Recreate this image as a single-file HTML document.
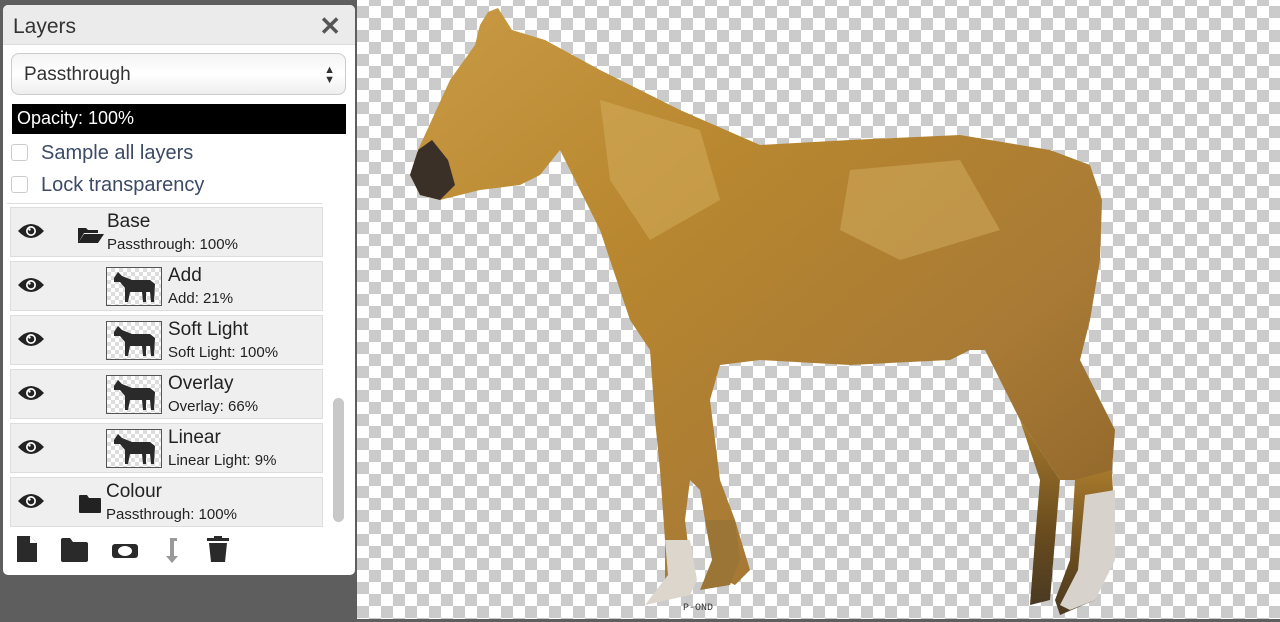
<!DOCTYPE html>
<html><head><meta charset="utf-8"><style>
*{box-sizing:border-box;margin:0;padding:0}
body{width:1280px;height:622px;background:#5e5e5e;position:relative;overflow:hidden;font-family:"Liberation Sans",sans-serif}
#canvas{position:absolute;left:357px;top:0;width:923px;height:619px;background-color:#fff;
background-image:linear-gradient(45deg,#cbcbcb 25%,transparent 25%,transparent 75%,#cbcbcb 75%),linear-gradient(45deg,#cbcbcb 25%,transparent 25%,transparent 75%,#cbcbcb 75%);
background-size:24px 24px;background-position:0 -6px,12px 6px}
#panel{position:absolute;left:3px;top:5px;width:352px;height:570px;background:#fff;border-radius:5px;overflow:hidden}
.hdr{height:40px;background:#ebebeb;border-bottom:1px solid #ddd;position:relative}
.hdr span{position:absolute;left:10px;top:10px;font-size:21px;color:#333}
.hdr b{position:absolute;right:14px;top:6px;font-size:26px;color:#555}
.sel{position:absolute;left:8px;top:48px;width:335px;height:42px;border:1px solid #ccc;border-radius:8px;background:linear-gradient(#f4f4f4,#fff 50%,#eee);font-size:19px;color:#333;padding:10px 12px}
.sel i{position:absolute;right:10px;top:11px;font-style:normal;font-size:11px;line-height:10px;color:#333}
.op{position:absolute;left:9px;top:99px;width:334px;height:30px;background:#000;color:#fff;font-size:18px;padding:4px 5px}
.cb{position:absolute;left:8px;width:17px;height:17px;border:1px solid #ccc;border-radius:3px}
.cl{position:absolute;left:38px;font-size:20px;color:#3c4a66}
.list{position:absolute;left:4px;top:198px;width:315px;height:322px;border-top:1px solid #ddd}
.row{position:absolute;left:3px;width:313px;height:50px;background:#efefef;border:1px solid #ddd}
.eye{position:absolute;left:6px;top:14px}
.n{position:absolute;font-size:19px;color:#222}
.s{position:absolute;font-size:15px;color:#222}
.th{position:absolute;left:95px;top:5px;width:56px;height:39px;border:1px solid #555;background-color:#fff;background-image:linear-gradient(45deg,#ddd 25%,transparent 25%,transparent 75%,#ddd 75%),linear-gradient(45deg,#ddd 25%,transparent 25%,transparent 75%,#ddd 75%);background-size:8px 8px;background-position:0 0,4px 4px}
.th svg{position:absolute;left:3px;top:2px}
.sb{position:absolute;left:330px;top:393px;width:11px;height:124px;background:#c8c8c8;border-radius:6px}
</style></head><body>
<div id="canvas">
<svg width="923" height="619" viewBox="357 0 923 619" style="position:absolute;left:0;top:0">
<defs>
<linearGradient id="g" x1="0" y1="0" x2="1" y2="1">
<stop offset="0" stop-color="#c99a45"/><stop offset=".35" stop-color="#b8872f"/><stop offset=".7" stop-color="#a87a35"/><stop offset="1" stop-color="#8a6228"/></linearGradient>
<linearGradient id="leg" x1="0" y1="0" x2="0" y2="1"><stop offset="0" stop-color="#a77a2c"/><stop offset=".6" stop-color="#6a4c1e"/><stop offset="1" stop-color="#4a3a22"/></linearGradient>
</defs>
<path d="M488,12 L498,8 L512,30 L545,40 L600,70 L680,110 L760,145 L850,140 L960,135 L1050,150 L1090,165 L1102,200 L1100,260 L1090,320 L1080,360 L1100,400 L1115,430 L1112,470 L1100,480 L1060,480 L1020,420 L1000,380 L985,350 L970,350 L950,360 L850,365 L760,360 L720,365 L710,400 L720,480 L735,520 L750,570 L735,585 L715,575 L705,520 L700,490 L690,480 L685,520 L690,560 L690,590 L665,595 L665,540 L660,470 L655,420 L650,350 L630,320 L600,230 L560,150 L540,175 L520,185 L480,190 L440,200 L420,195 L410,175 L418,150 L450,80 L475,45 L480,25 Z" fill="url(#g)"/>
<path d="M1020,420 L1060,480 L1050,600 L1030,605 L1035,540 L1040,480 Z" fill="url(#leg)"/>
<path d="M1075,480 L1112,470 L1115,540 L1095,600 L1060,615 L1055,600 L1070,560 Z" fill="url(#leg)"/>
<path d="M665,540 L690,540 L697,580 L690,595 L645,605 L668,575 Z" fill="#ddd6cc"/>
<path d="M1085,495 L1115,490 L1115,560 L1095,600 L1070,610 L1060,605 L1078,570 Z" fill="#d8d2cc"/>
<path d="M705,520 L735,520 L740,560 L730,585 L700,590 L712,560 Z" fill="#9a7535"/>
<path d="M418,150 L432,140 L448,160 L455,185 L440,200 L420,195 L410,175 Z" fill="#3a3028"/>
<path d="M600,100 L700,130 L720,200 L650,240 L610,180 Z" fill="#d6b060" opacity=".5"/>
<path d="M850,170 L960,160 L1000,230 L900,260 L840,230 Z" fill="#d8b468" opacity=".45"/>
<text x="683" y="610" font-size="10" font-family="Liberation Mono,monospace" fill="#333">P-OND</text>
</svg>
</div>
<div id="panel">
<div class="hdr"><span>Layers</span><b>✕</b></div>
<div class="sel">Passthrough<i>▲<br>▼</i></div>
<div class="op">Opacity: 100%</div>
<div class="cb" style="top:139px"></div><div class="cl" style="top:137px">Sample all layers</div>
<div class="cb" style="top:171px"></div><div class="cl" style="top:169px">Lock transparency</div>
<div class="list">
<div class="row" style="top:3px"><svg class="eye" width="28" height="18" viewBox="0 0 28 18"><path d="M1,9 Q14,-5 27,9 Q14,23 1,9Z" fill="#222"/><circle cx="14" cy="9" r="5" fill="#fff"/><circle cx="14" cy="9" r="3.3" fill="#222"/><circle cx="12.5" cy="7.5" r="1.2" fill="#fff"/></svg>
<svg style="position:absolute;left:67px;top:18px" width="26" height="18" viewBox="0 0 26 18"><path d="M0,2 H8 L10,4 H20 V7 H6 L0,17Z M6,8 H26 L20,17 H0Z" fill="#222"/></svg>
<div class="n" style="left:96px;top:3px">Base</div><div class="s" style="left:96px;top:28px">Passthrough: 100%</div></div>
<div class="row" style="top:57px"><svg class="eye" width="28" height="18" viewBox="0 0 28 18"><path d="M1,9 Q14,-5 27,9 Q14,23 1,9Z" fill="#222"/><circle cx="14" cy="9" r="5" fill="#fff"/><circle cx="14" cy="9" r="3.3" fill="#222"/><circle cx="12.5" cy="7.5" r="1.2" fill="#fff"/></svg><div class="th"><svg width="48" height="34" viewBox="0 0 48 34"><path d="M4,8 L8,2 L12,6 L22,10 L40,10 L45,14 L44,32 L41,32 L40,22 L36,22 L36,32 L33,32 L32,22 L20,22 L18,32 L15,32 L15,18 L10,12 L4,12Z" fill="#2a2a2a"/></svg></div>
<div class="n" style="left:157px;top:3px">Add</div><div class="s" style="left:157px;top:28px">Add: 21%</div></div>
<div class="row" style="top:111px"><svg class="eye" width="28" height="18" viewBox="0 0 28 18"><path d="M1,9 Q14,-5 27,9 Q14,23 1,9Z" fill="#222"/><circle cx="14" cy="9" r="5" fill="#fff"/><circle cx="14" cy="9" r="3.3" fill="#222"/><circle cx="12.5" cy="7.5" r="1.2" fill="#fff"/></svg><div class="th"><svg width="48" height="34" viewBox="0 0 48 34"><path d="M4,8 L8,2 L12,6 L22,10 L40,10 L45,14 L44,32 L41,32 L40,22 L36,22 L36,32 L33,32 L32,22 L20,22 L18,32 L15,32 L15,18 L10,12 L4,12Z" fill="#2a2a2a"/></svg></div>
<div class="n" style="left:157px;top:3px">Soft Light</div><div class="s" style="left:157px;top:28px">Soft Light: 100%</div></div>
<div class="row" style="top:165px"><svg class="eye" width="28" height="18" viewBox="0 0 28 18"><path d="M1,9 Q14,-5 27,9 Q14,23 1,9Z" fill="#222"/><circle cx="14" cy="9" r="5" fill="#fff"/><circle cx="14" cy="9" r="3.3" fill="#222"/><circle cx="12.5" cy="7.5" r="1.2" fill="#fff"/></svg><div class="th"><svg width="48" height="34" viewBox="0 0 48 34"><path d="M4,8 L8,2 L12,6 L22,10 L40,10 L45,14 L44,32 L41,32 L40,22 L36,22 L36,32 L33,32 L32,22 L20,22 L18,32 L15,32 L15,18 L10,12 L4,12Z" fill="#2a2a2a"/></svg></div>
<div class="n" style="left:157px;top:3px">Overlay</div><div class="s" style="left:157px;top:28px">Overlay: 66%</div></div>
<div class="row" style="top:219px"><svg class="eye" width="28" height="18" viewBox="0 0 28 18"><path d="M1,9 Q14,-5 27,9 Q14,23 1,9Z" fill="#222"/><circle cx="14" cy="9" r="5" fill="#fff"/><circle cx="14" cy="9" r="3.3" fill="#222"/><circle cx="12.5" cy="7.5" r="1.2" fill="#fff"/></svg><div class="th"><svg width="48" height="34" viewBox="0 0 48 34"><path d="M4,8 L8,2 L12,6 L22,10 L40,10 L45,14 L44,32 L41,32 L40,22 L36,22 L36,32 L33,32 L32,22 L20,22 L18,32 L15,32 L15,18 L10,12 L4,12Z" fill="#2a2a2a"/></svg></div>
<div class="n" style="left:157px;top:3px">Linear</div><div class="s" style="left:157px;top:28px">Linear Light: 9%</div></div>
<div class="row" style="top:273px"><svg class="eye" width="28" height="18" viewBox="0 0 28 18"><path d="M1,9 Q14,-5 27,9 Q14,23 1,9Z" fill="#222"/><circle cx="14" cy="9" r="5" fill="#fff"/><circle cx="14" cy="9" r="3.3" fill="#222"/><circle cx="12.5" cy="7.5" r="1.2" fill="#fff"/></svg>
<svg style="position:absolute;left:68px;top:17px" width="22" height="18" viewBox="0 0 22 18"><path d="M0,1 Q0,0 1,0 H8 L10,3 H21 Q22,3 22,4 V17 Q22,18 21,18 H1 Q0,18 0,17Z" fill="#222"/></svg>
<div class="n" style="left:95px;top:3px">Colour</div><div class="s" style="left:95px;top:28px">Passthrough: 100%</div></div>
</div>
<div class="sb"></div>
<svg style="position:absolute;left:14px;top:531px" width="220" height="28" viewBox="0 0 220 28">
<path d="M0,0 H13 L20,7 V26 H0Z" fill="#2a2a2a"/><path d="M13,0 V7 H20" fill="#fff"/>
<path d="M44,4 Q44,2 46,2 H53 L56,6 H69 Q71,6 71,8 V24 Q71,26 69,26 H46 Q44,26 44,24Z" fill="#2a2a2a"/>
<rect x="95" y="8" width="26" height="14" rx="3" fill="#2a2a2a"/><ellipse cx="108" cy="15" rx="7" ry="5" fill="#fff"/>
<path d="M152,2 H160 V5 H157 V20 H161 L155,27 L149,20 H153 V2Z" fill="#999"/>
<rect x="190" y="2" width="22" height="3" fill="#2a2a2a"/><rect x="197" y="0" width="8" height="3" fill="#2a2a2a"/><path d="M192,7 H210 L208,26 H194Z" fill="#2a2a2a"/>
</svg>
</div>
</body></html>
